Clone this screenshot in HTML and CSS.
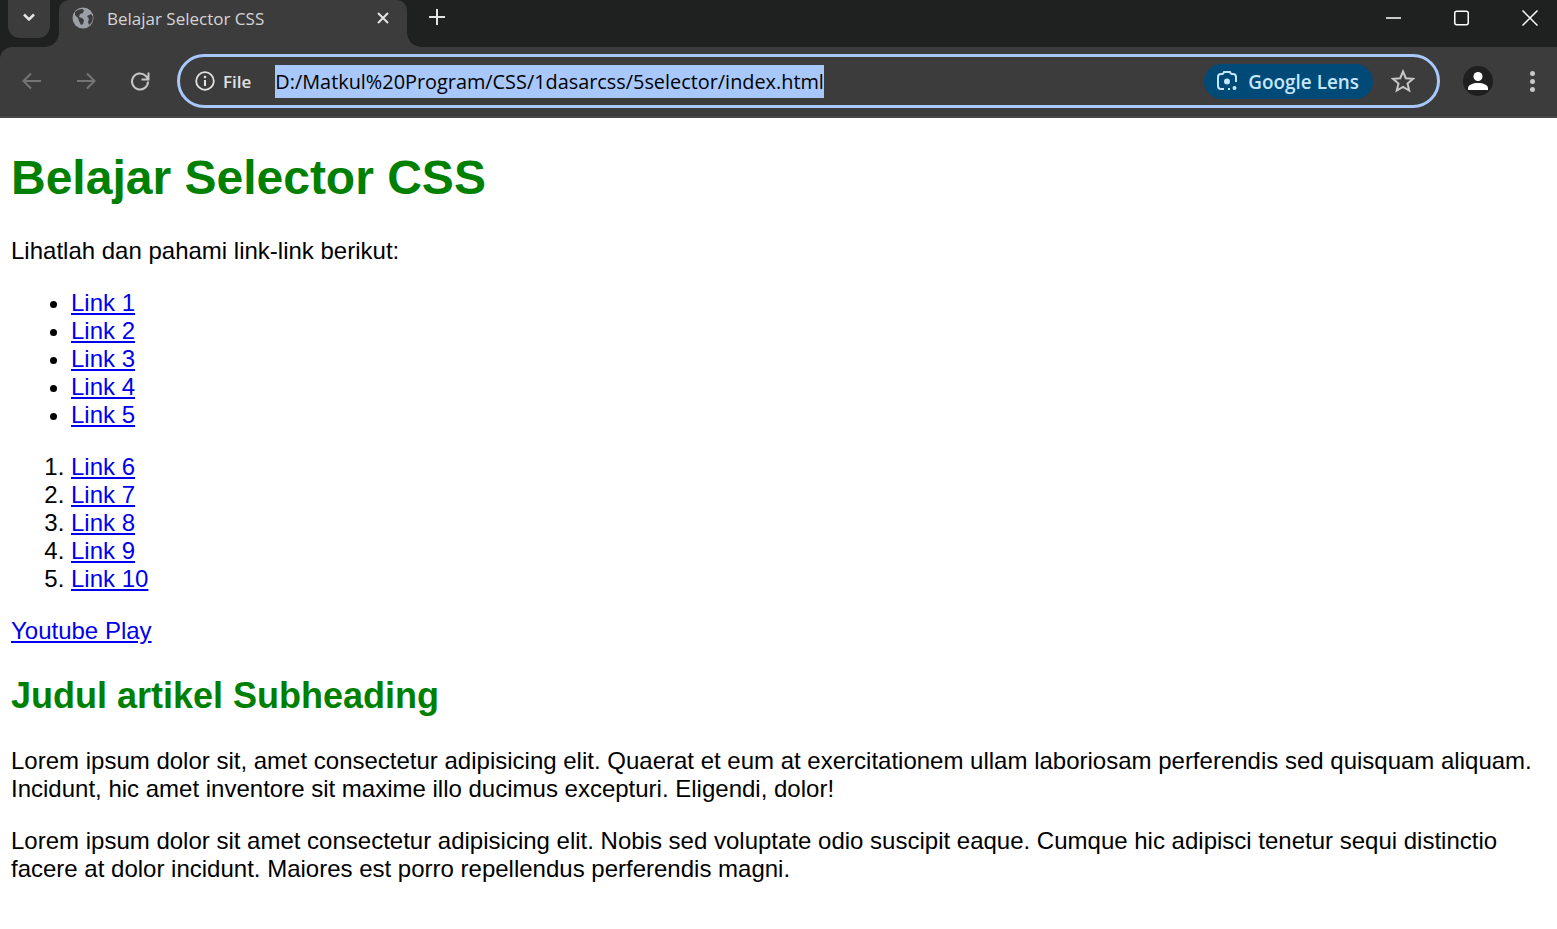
FILE: index.html
```html
<!DOCTYPE html>
<html>
<head>
  <meta charset="utf-8">
  <meta name="viewport" content="width=device-width">
  <title>Belajar Selector CSS</title>
  <link rel="stylesheet" href="styles.css">
</head>
<body>

  <header class="browser">
    <div class="tabstrip">
      <div class="tab-search">
        <svg width="14" height="14" viewBox="0 0 14 14"><path d="M2 4.500 7 9.500 12 4.500" fill="none" stroke="#e3e3e3" stroke-width="2.500"/></svg>
      </div>
      <div class="tab">
        <svg class="tab-globe" width="22" height="22" viewBox="0 0 22 22">
          <circle cx="11" cy="11" r="10.500" fill="#9aa0a6"/>
          <path d="M3 5c2-2 5-3 7-3l2 1-1 3-3 1-1 3 3 1 2 2-1 4-2 1-2-4-1-3-3-3zM15 9l4-2 2 3-1 5-3 3-1-3 1-3z" fill="#3c3c3c"/>
        </svg>
        <span class="tab-title">Belajar Selector CSS</span>
        <svg class="tab-close" width="12" height="12" viewBox="0 0 12 12"><path d="M1 1 11 11M11 1 1 11" stroke="#e3e3e3" stroke-width="2"/></svg>
      </div>
      <svg class="new-tab" width="16" height="16" viewBox="0 0 16 16"><path d="M8 0V16M0 8H16" stroke="#e3e3e3" stroke-width="2"/></svg>
      <div class="win-controls">
        <svg width="16" height="16" viewBox="0 0 16 16"><path d="M0 8H15" stroke="#fff" stroke-width="1.500"/></svg>
        <svg width="16" height="16" viewBox="0 0 16 16"><rect x=".75" y="1.250" width="13.500" height="13.500" rx="2" fill="none" stroke="#fff" stroke-width="1.500"/></svg>
        <svg width="16" height="16" viewBox="0 0 16 16"><path d="M.5.5 15.500 15.500M15.500.5.500 15.500" stroke="#fff" stroke-width="1.500"/></svg>
      </div>
    </div>

    <div class="toolbar">
      <div class="nav">
        <svg width="22" height="22" viewBox="0 0 22 22"><path d="M20 11H3M10 3.500 2.500 11 10 18.500" fill="none" stroke="#757575" stroke-width="2"/></svg>
        <svg width="22" height="22" viewBox="0 0 22 22"><path d="M2 11H19M12 3.500 19.500 11 12 18.500" fill="none" stroke="#757575" stroke-width="2"/></svg>
        <svg width="22" height="22" viewBox="0 0 22 22"><path d="M19 11.500a8 8 0 1 1-2.400-5.700L19 8.500M19.500 2.500v7h-7" fill="none" stroke="#c7c7c7" stroke-width="2"/></svg>
      </div>
      <div class="omnibox">
        <div class="site-info">
          <svg width="20" height="20" viewBox="0 0 20 20"><circle cx="10" cy="10" r="8.800" fill="none" stroke="#e3e3e3" stroke-width="1.800"/><path d="M10 9v6" stroke="#e3e3e3" stroke-width="2"/><circle cx="10" cy="6" r="1.300" fill="#e3e3e3"/></svg>
          <span>File</span>
        </div>
        <span class="url">D:/Matkul%20Program/CSS/1dasarcss/5selector/index.html</span>
        <div class="lens">
          <svg width="22" height="22" viewBox="0 0 22 22"><path d="M7 4H5a3 3 0 0 0-3 3v9a3 3 0 0 0 3 3h3M15 4h2a3 3 0 0 1 3 3v5M7 4l1-2h6l1 2M12 19h2" fill="none" stroke="#c2e7ff" stroke-width="2"/><circle cx="11" cy="11.500" r="3" fill="#c2e7ff"/><circle cx="18.500" cy="18" r="2" fill="#c2e7ff"/></svg>
          <span>Google Lens</span>
        </div>
        <svg class="star" width="24" height="24" viewBox="0 0 24 24"><path d="M12 2.500 14.800 9.200 22 9.800 16.500 14.500 18.200 21.500 12 17.800 5.800 21.500 7.500 14.500 2 9.800 9.200 9.200Z" fill="none" stroke="#c7c7c7" stroke-width="2"/></svg>
      </div>
      <div class="avatar">
        <svg width="20" height="20" viewBox="0 0 20 20"><circle cx="10" cy="5.500" r="4.500" fill="#fff"/><path d="M0 19v-2c0-3 5-5 10-5s10 2 10 5v2z" fill="#fff"/></svg>
      </div>
      <div class="menu"><i></i><i></i><i></i></div>
    </div>
  </header>

  <main class="page">
    <h1>Belajar Selector CSS</h1>
    <p>Lihatlah dan pahami link-link berikut:</p>
    <ul>
      <li><a href="#">Link 1</a></li>
      <li><a href="#">Link 2</a></li>
      <li><a href="#">Link 3</a></li>
      <li><a href="#">Link 4</a></li>
      <li><a href="#">Link 5</a></li>
    </ul>
    <ol>
      <li><a href="#">Link 6</a></li>
      <li><a href="#">Link 7</a></li>
      <li><a href="#">Link 8</a></li>
      <li><a href="#">Link 9</a></li>
      <li><a href="#">Link 10</a></li>
    </ol>
    <p><a href="#">Youtube Play</a></p>
    <h2>Judul artikel Subheading</h2>
    <p>Lorem ipsum dolor sit, amet consectetur adipisicing elit. Quaerat et eum at exercitationem ullam laboriosam perferendis sed quisquam aliquam. Incidunt, hic amet inventore sit maxime illo ducimus excepturi. Eligendi, dolor!</p>
    <p>Lorem ipsum dolor sit amet consectetur adipisicing elit. Nobis sed voluptate odio suscipit eaque. Cumque hic adipisci tenetur sequi distinctio facere at dolor incidunt. Maiores est porro repellendus perferendis magni.</p>
  </main>

</body>
</html>
```

FILE: styles.css
```css
* {
  box-sizing: border-box;
}
html, body {
  margin: 0;
  background: #fff;
}
body {
  overflow: hidden;
}

/* browser frame */
.browser {
  font-family: "Open Sans", sans-serif;
  color: #e3e3e3;
  background: #1f2020;
}
.tabstrip {
  display: flex;
  align-items: flex-start;
  height: 47px;
  padding-left: 8px;
}
.tab-search {
  display: flex;
  align-items: center;
  justify-content: center;
  width: 42px;
  height: 38px;
  padding-bottom: 4px;
  background: #3c3c3c;
  border-radius: 0 0 12px 12px;
}
.tab {
  position: relative;
  display: flex;
  align-items: center;
  width: 348px;
  height: 47px;
  margin-left: 9px;
  padding: 0 18px 12px 13px;
  background: #3c3c3c;
  border-radius: 10px 10px 0 0;
}
.tab::before,
.tab::after {
  content: "";
  position: absolute;
  bottom: 0;
  width: 14px;
  height: 14px;
}
.tab::before {
  left: -14px;
  background: radial-gradient(circle at 0 0, transparent 13.500px, #3c3c3c 14px);
}
.tab::after {
  right: -14px;
  background: radial-gradient(circle at 100% 0, transparent 13.500px, #3c3c3c 14px);
}
.tab-globe {
  flex: none;
}
.tab-title {
  flex: 1;
  margin: 2px 0 0 13px;
  font-size: 17px;
  color: #d5d5d5;
}
.new-tab {
  margin: 9px 0 0 22px;
}
.win-controls {
  display: flex;
  gap: 52px;
  margin: 10px 19px 0 auto;
}
.toolbar {
  display: flex;
  align-items: center;
  height: 71px;
  padding: 7px 17px 8px 21px;
  background: #3c3c3c;
  border-top-left-radius: 12px;
  border-bottom: 2px solid #474747;
}
.nav {
  display: flex;
  gap: 32px;
}
.omnibox {
  display: flex;
  align-items: center;
  width: 1263px;
  height: 54px;
  margin: 0 23px 0 26px;
  padding: 0 22px 0 15px;
  border: 3px solid #a8c7fa;
  border-radius: 27px;
}
.site-info {
  display: flex;
  align-items: center;
  gap: 8px;
  font-size: 17px;
  font-weight: 600;
}
.url {
  margin-left: 24px;
  padding: 1px 0;
  background: #a8c7fa;
  color: #000;
  font-size: 19.880px;
  line-height: 31px;
  white-space: nowrap;
}
.lens {
  display: flex;
  align-items: center;
  gap: 10px;
  height: 35px;
  margin-left: auto;
  padding: 0 14px 0 12px;
  background: #004a77;
  border-radius: 18px;
  color: #c2e7ff;
  font-size: 18.900px;
  font-weight: 600;
}
.lens span {
  margin-top: 2px;
}
.star {
  margin-left: 18px;
}
.avatar {
  display: flex;
  align-items: center;
  justify-content: center;
  width: 30px;
  height: 30px;
  border-radius: 50%;
  background: #1f1f1f;
}
.menu {
  display: flex;
  flex-direction: column;
  gap: 3px;
  margin-left: 37px;
}
.menu i {
  width: 5px;
  height: 5px;
  border-radius: 50%;
  background: #c7c7c7;
}

/* page content, at 150% zoom */
.page {
  padding: 0 11px;
  font-family: "Liberation Sans", Arial, sans-serif;
  font-size: 24px;
  line-height: 28px;
  color: #000;
}
h1 {
  margin: 32px 0;
  font-size: 48px;
  line-height: 55px;
  color: green;
}
h2 {
  margin: 30px 0 31px;
  font-size: 36px;
  line-height: 41px;
  color: green;
}
p {
  margin: 24px 0;
}
ul, ol {
  margin: 24px 0;
  padding-left: 60px;
}
a {
  color: #00e;
}
```
